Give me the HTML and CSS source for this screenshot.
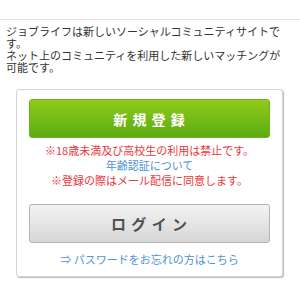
FILE: index.html
```html
<!DOCTYPE html>
<html>
<head>
  <meta charset="utf-8">
  <title>ジョブライフ</title>
  <link rel="stylesheet" href="styles.css">
</head>
<body>
  <div class="header"></div>
  <div class="intro">
    <p>ジョブライフは新しいソーシャルコミュニティサイトです。</p>
    <p>ネット上のコミュニティを利用した新しいマッチングが可能です。</p>
  </div>

  <div class="panel">
    <a class="btn-entry" href="#">新 規 登 録</a>
    <div class="notes">
      <div class="note-red">※18歳未満及び高校生の利用は禁止です。</div>
      <div><a class="note-link" href="#">年齢認証について</a></div>
      <div class="note-red">※登録の際はメール配信に同意します。</div>
    </div>
    <a class="btn-login" href="#">ロ グ イ ン</a>
    <div class="forgot"><a href="#">⇒ パスワードをお忘れの方はこちら</a></div>
  </div>

  <div class="footer"></div>
</body>
</html>
```

FILE: styles.css
```css
body {
  margin: 0;
  font-family: "Noto Sans CJK JP", "Noto Sans", sans-serif;
  background: #fff;
  color: #333;
}

a {
  text-decoration: none;
}

.header {
  height: 19px;
  border-bottom: 1px solid #e2e2e2;
}

.intro {
  margin: 5px 10px 0 6px;
  font-size: 11px;
  line-height: 12px;
  color: #333;
}

.intro p {
  margin: 0;
}

.panel {
  margin: 16px 16px 0 16px;
  width: 241px;
  padding: 9px 12px 9px;
  border: 1px solid #d4d4d4;
  border-radius: 3px;
  box-shadow: 1px 1px 1px #bbb;
  background: #fff;
}

.btn-entry {
  display: flex;
  justify-content: center;
  align-items: center;
  height: 37px;
  border: 1px solid #6cb317;
  border-radius: 3px;
  background: linear-gradient(#8fcb1c, #5cab12);
  color: #fff;
  font-size: 14px;
  font-weight: bold;
  letter-spacing: 1px;
}

.notes {
  margin-top: 5px;
  text-align: center;
  font-size: 11px;
  line-height: 15px;
}

.note-red {
  color: #e8383d;
}

.note-link {
  color: #4f94d4;
}

.btn-login {
  display: flex;
  justify-content: center;
  align-items: center;
  margin-top: 16px;
  height: 37px;
  border: 1px solid #b4b4b4;
  border-radius: 3px;
  background: linear-gradient(#f3f3f3, #d6d6d6);
  color: #505050;
  font-size: 15px;
  font-weight: bold;
  letter-spacing: 1px;
}

.forgot {
  margin-top: 9px;
  text-align: center;
  font-size: 11px;
  line-height: 15px;
}

.forgot a {
  color: #4f94d4;
}

.footer {
  margin-top: 20px;
  border-top: 2px solid #f3d64e;
}
```
